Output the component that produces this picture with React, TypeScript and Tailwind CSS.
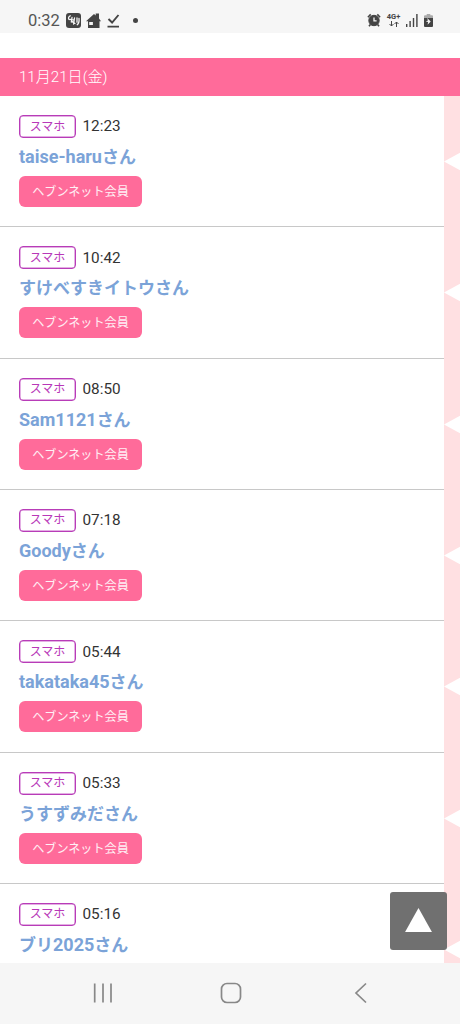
import React from 'react';

interface Visit {
  time: string;
  name: string;
  member: boolean;
}

const visits: Visit[] = [
  { time: '12:23', name: 'taise-haru', member: true },
  { time: '10:42', name: 'すけべすきイトウ', member: true },
  { time: '08:50', name: 'Sam1121', member: true },
  { time: '07:18', name: 'Goody', member: true },
  { time: '05:44', name: 'takataka45', member: true },
  { time: '05:33', name: 'うすずみだ', member: true },
  { time: '05:16', name: 'ブリ2025', member: false },
];

const StatusBar: React.FC = () => (
  <header className="flex h-[33px] shrink-0 items-end justify-between bg-[#f6f6f6] pb-[4px] pl-[28px] pr-[27px] text-[#444]">
    <div className="flex items-center">
      <span className="w-[38px] text-[16.5px] leading-[17px] text-[#555]">0:32</span>
      <svg width="15" height="15" viewBox="0 0 15 15">
        <rect width="15" height="15" rx="3" fill="#444" />
        <path
          d="M4.2 2.8C2.4 3.6 2 5.4 3.2 6.6M6 4.5L5.3 9M4 6.3L8.2 7.2M8.5 5L7.6 11M6.2 8.6L9 10.5M11 5v4.2M13 5.5c.3 3-.2 5-1.8 6.2"
          fill="none"
          stroke="#f6f6f6"
          strokeWidth="1.3"
          strokeLinecap="round"
        />
      </svg>
      <svg className="ml-[5px]" width="15" height="15" viewBox="0 0 15 15" fill="#444">
        <path d="M0 8.3L8 1l1.7 1.6V.4H13v5.2L15 8.3h-1.5V15H2V8.3z" />
        <path d="M3.2 9h3.7v3H3.2z" fill="#f6f6f6" />
      </svg>
      <svg className="ml-[6px]" width="13" height="14" viewBox="0 0 13 14" fill="none" stroke="#444" strokeWidth="1.9">
        <path d="M1.5 5l3.6 3.5L11.5 1M.5 12.6H12" />
      </svg>
      <span className="ml-[13px] h-[5px] w-[5px] rounded-full bg-[#444]" />
    </div>
    <div className="flex items-center pb-[2px]">
      <svg width="14" height="14" viewBox="0 0 14 14" fill="none" stroke="#444">
        <circle cx="7" cy="7.5" r="5.2" fill="#444" />
        <path d="M.9 4.2L3.7 1.4M13.1 4.2l-2.8-2.8M3.4 11.4L2 13.2M10.6 11.4l1.4 1.8" strokeWidth="1.6" />
        <path d="M7 4.5v3.3h2.6" stroke="#f6f6f6" strokeWidth="1.3" />
      </svg>
      <div className="ml-[5px] flex w-[15px] flex-col items-center">
        <span className="text-[7.5px] font-bold leading-[8px]">4G+</span>
        <svg width="10" height="6" viewBox="0 0 10 6" fill="none" stroke="#444" strokeWidth="1">
          <path d="M2.5 0v5M.5 3l2 2 2-2M7.5 6V1M5.5 3l2-2 2 2" />
        </svg>
      </div>
      <svg className="ml-[5px]" width="12" height="13" viewBox="0 0 12 13" fill="#444">
        <path d="M0 10h1.4v3H0zM3.4 7h1.4v6H3.4zM6.8 4h1.4v9H6.8zM10.2 0h1.4v13h-1.4z" />
      </svg>
      <svg className="ml-[6px]" width="9" height="13" viewBox="0 0 9 13">
        <path d="M2.7 0h3.6v1.2H8a1 1 0 0 1 1 1V4H0V2.2a1 1 0 0 1 1-1h1.7z" fill="#aaa" />
        <path d="M0 4h9v8a1 1 0 0 1-1 1H1a1 1 0 0 1-1-1z" fill="#444" />
        <path d="M3.2 4L6.7 7.4 3.6 10.8l.5-2.9-2.3-.5 2.1-1z" fill="#f6f6f6" />
      </svg>
    </div>
  </header>
);

// Latin runs are set slightly larger than the kana around them
const VisitorName: React.FC<{ name: string }> = ({ name }) => (
  <p className="mt-[8px] h-[22px] whitespace-nowrap text-[17px] font-bold leading-[22px] text-[#7ba3d8]">
    {name.split(/([\x21-\x7e]+)/).map((part, i) =>
      i % 2 === 1 ? (
        <span key={i} className="text-[18px] leading-none">
          {part}
        </span>
      ) : (
        part
      )
    )}
    さん
  </p>
);

const VisitRow: React.FC<Visit> = ({ time, name, member }) => (
  <li className="flex h-[131.33px] shrink-0 flex-col items-start border-b-[1.5px] border-[#c8c8c8] pl-[19px] pt-[19px]">
    <div className="flex h-[23px] items-center">
      <span className="flex h-[23px] w-[57px] items-center justify-center rounded-[4px] border border-[#b83cb8] text-[12px] leading-none text-[#b838b8] shadow-[inset_0_0_0_0.5px_#c860c8]">
        スマホ
      </span>
      <span className="ml-[6.5px] pt-[1px] text-[15.3px] leading-none text-[#333]">{time}</span>
    </div>
    <VisitorName name={name} />
    {member && (
      <span className="mt-[8px] flex h-[31px] w-[123px] items-center justify-center rounded-[6px] bg-[#ff6b9a] pt-[1px] text-[12.1px] leading-none text-white/90">
        ヘブンネット会員
      </span>
    )}
  </li>
);

// Pink side strip with a white notch beside every row
const SideStrip: React.FC = () => (
  <div className="flex w-[16.5px] shrink-0 flex-col overflow-hidden bg-[#ffe0e2]">
    {visits.map((visit) => (
      <svg key={visit.time} className="h-[131.33px] w-[16.5px] shrink-0" viewBox="0 0 16.5 131.33">
        <path d="M0 65.5L16.5 56.5v18z" fill="#fff" />
      </svg>
    ))}
  </div>
);

const NavBar: React.FC = () => (
  <nav className="flex h-[61px] shrink-0 items-center bg-[#f6f6f6] pb-[2px] pl-[93px]">
    <svg width="20" height="22" viewBox="0 0 20 22" stroke="#888" strokeWidth="1.7">
      <path d="M1.7 1.5v19M10 1.5v19M18 1.5v19" />
    </svg>
    <svg className="ml-[107px]" width="22" height="22" viewBox="0 0 22 22" fill="none" stroke="#888" strokeWidth="1.7">
      <rect x="1.5" y="1.5" width="19" height="19" rx="5.5" />
    </svg>
    <svg className="ml-[112px]" width="13" height="22" viewBox="0 0 13 22" fill="none" stroke="#888" strokeWidth="1.7">
      <path d="M12 1.5L2 11l10 9.5" />
    </svg>
  </nav>
);

const App: React.FC = () => {
  return (
    <div className="relative flex h-[1024px] w-[460px] flex-col overflow-hidden bg-white font-[Roboto,'Noto_Sans_CJK_JP',sans-serif]">
      <StatusBar />
      <h2 className="mt-[25px] flex h-[38px] shrink-0 items-center bg-[#ff6b9a] pl-[19px] pt-[2px] text-[15.1px] font-light leading-none text-white">
        11月21日(金)
      </h2>
      <main className="flex min-h-0 flex-1 overflow-hidden">
        <ul className="flex flex-1 flex-col">
          {visits.map((visit) => (
            <VisitRow key={visit.time} {...visit} />
          ))}
        </ul>
        <SideStrip />
      </main>
      <NavBar />
      <button className="absolute bottom-[74px] right-[13px] flex h-[58px] w-[57px] items-center justify-center rounded-[3px] bg-[#707070]">
        <svg className="mr-px mb-[3px]" width="27" height="24" viewBox="0 0 28 25" fill="#fff">
          <path d="M14 0l14 25H0z" />
        </svg>
      </button>
    </div>
  );
};

export default App;
